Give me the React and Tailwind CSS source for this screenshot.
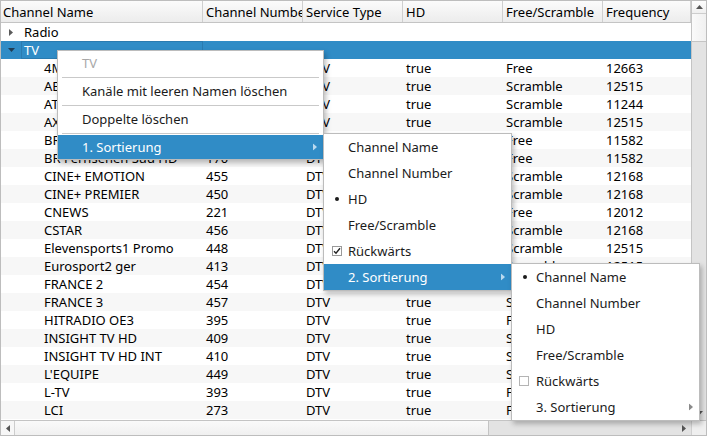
import { Fragment } from "react";

const headers = ["Channel Name", "Channel Number", "Service Type", "HD", "Free/Scramble", "Frequency"];

const rows = [
    ["4MUSIC HD", "412", "DTV", "true", "Free", "12663"],
    ["ABC Deutschland", "401", "DTV", "true", "Scramble", "12515"],
    ["ATV HD", "403", "DTV", "true", "Scramble", "11244"],
    ["AXN HD", "406", "DTV", "true", "Scramble", "12515"],
    ["BR Fernsehen Nord HD", "169", "DTV", "true", "Free", "11582"],
    ["BR Fernsehen Süd HD", "170", "DTV", "true", "Free", "11582"],
    ["CINE+ EMOTION", "455", "DTV", "true", "Scramble", "12168"],
    ["CINE+ PREMIER", "450", "DTV", "true", "Scramble", "12168"],
    ["CNEWS", "221", "DTV", "true", "Free", "12012"],
    ["CSTAR", "456", "DTV", "true", "Scramble", "12168"],
    ["Elevensports1 Promo", "448", "DTV", "true", "Scramble", "12515"],
    ["Eurosport2 ger", "413", "DTV", "true", "Scramble", "12515"],
    ["FRANCE 2", "454", "DTV", "true", "Scramble", "12168"],
    ["FRANCE 3", "457", "DTV", "true", "Scramble", "12168"],
    ["HITRADIO OE3", "395", "DTV", "true", "Free", "12692"],
    ["INSIGHT TV HD", "409", "DTV", "true", "Scramble", "12515"],
    ["INSIGHT TV HD INT", "410", "DTV", "true", "Scramble", "12515"],
    ["L'EQUIPE", "449", "DTV", "true", "Scramble", "12168"],
    ["L-TV", "393", "DTV", "true", "Free", "12633"],
    ["LCI", "273", "DTV", "true", "Free", "12012"],
];

const colW = ["w-[202px]", "w-[100px]", "w-[100px]", "w-[100px]", "w-[100px]", "flex-1"];

const Tri = ({ dir, color }) => {
    // small tree / menu arrows
    if (dir === "down") {
        return (
            <svg width="7" height="4" viewBox="0 0 7 4"><path d="M0 0h7L3.5 4z" fill={color} /></svg>
        );
    }
    if (dir === "up") {
        return (
            <svg width="7" height="4" viewBox="0 0 7 4"><path d="M0 4h7L3.5 0z" fill={color} /></svg>
        );
    }
    if (dir === "left") {
        return (
            <svg width="4" height="7" viewBox="0 0 4 7"><path d="M4 0v7L0 3.5z" fill={color} /></svg>
        );
    }
    return (
        <svg width="4" height="7" viewBox="0 0 4 7"><path d="M0 0v7l4-3.5z" fill={color} /></svg>
    );
};

const MenuItem = ({ label, h = "h-[26px]", active, mark, sub, disabled }) => (
    <div className={`relative flex items-center pl-[24px] ${h} ${active ? "bg-[#308cc6] text-white" : disabled ? "text-[#a8a8a8]" : "text-[#1b1b1b]"}`}>
        {mark === "dot" && (
            <span className="absolute left-[11px] top-1/2 -translate-y-1/2 w-[4px] h-[4px] rounded-full bg-[#1b1b1b]"></span>
        )}
        {mark === "checked" && (
            <span className="absolute left-[8px] top-1/2 -translate-y-1/2 w-[10px] h-[10px] border border-[#9a9a9a] bg-white flex items-center justify-center">
                <svg width="8" height="8" viewBox="0 0 8 8"><path d="M1 4.2l2 2L7 1.3" stroke="#222" strokeWidth="1.4" fill="none" /></svg>
            </span>
        )}
        {mark === "unchecked" && (
            <span className="absolute left-[7px] top-1/2 -translate-y-1/2 w-[10px] h-[10px] border border-[#b4b4b4] bg-white"></span>
        )}
        <span>{label}</span>
        {sub && (
            <span className="absolute right-[6px] top-1/2 -translate-y-1/2 flex">
                <Tri dir="right" color={active ? "#b9d9ef" : "#8a8a8a"} />
            </span>
        )}
    </div>
);

const Sep = () => (
    <div className="h-[4px] flex items-center px-[4px]">
        <div className="h-px w-full bg-[#c9c9c9]"></div>
    </div>
);

const SortMenu = ({ checked, dot, next, className }) => (
    <div className={`absolute w-[189px] bg-white border border-[#bcbcbc] shadow-[2px_3px_5px_rgba(0,0,0,0.25)] ${className}`}>
        <MenuItem label="Channel Name" mark={dot === 0 ? "dot" : null} />
        <MenuItem label="Channel Number" mark={dot === 1 ? "dot" : null} />
        <MenuItem label="HD" mark={dot === 2 ? "dot" : null} />
        <MenuItem label="Free/Scramble" mark={dot === 3 ? "dot" : null} />
        <MenuItem label="Rückwärts" mark={checked ? "checked" : "unchecked"} />
        <MenuItem label={next} sub active={next === "2. Sortierung"} />
    </div>
);

const App = () => {
    return (
        <div className="relative w-[707px] h-[436px] overflow-hidden bg-white border border-[#bdbdbd] font-['Noto_Sans',sans-serif] text-[13px] leading-[18px] text-black flex flex-col">
            <div className="flex flex-1 min-h-0">
                {/* table */}
                <div className="flex-1 flex flex-col min-w-0">
                    <div className="flex h-[22px] shrink-0 border-b border-[#c4c4c4] bg-gradient-to-b from-[#fbfbfb] to-[#ececec]">
                        {headers.map((h, i) => (
                            <div key={h} className={`${colW[i]} ${i === 0 ? "pl-[2px]" : "pl-[3px]"} border-r border-[#cfcfcf] flex items-center overflow-hidden whitespace-nowrap`}>
                                {h}
                            </div>
                        ))}
                    </div>

                    <div className="flex h-[18px] items-center bg-white">
                        <div className="w-[202px] flex items-center">
                            <span className="w-[20px] flex justify-center"><Tri dir="right" color="#5a5a5a" /></span>
                            <span className="pl-[3px]">Radio</span>
                        </div>
                    </div>

                    <div className="flex h-[18px] items-center bg-[#308cc6] text-white">
                        <div className="w-[202px] flex items-center h-full">
                            <span className="w-[20px] flex justify-center"><Tri dir="down" color="#1f3d55" /></span>
                            <span className="flex-1 h-full border border-[#2a7bb0] pl-[2px] flex items-center">TV</span>
                        </div>
                    </div>

                    {rows.map((r, i) => (
                        <div key={r[0]} className={`flex h-[18px] items-center whitespace-nowrap ${i % 2 ? "bg-[#f7f7f7]" : "bg-white"}`}>
                            {r.map((c, j) => (
                                <div key={j} className={`${colW[j]} ${j === 0 ? "pl-[43px]" : "pl-[3px]"} overflow-hidden`}>
                                    {c}
                                </div>
                            ))}
                        </div>
                    ))}
                </div>

                {/* vertical scrollbar */}
                <div className="w-[15px] border-l border-[#c4c4c4] bg-[#e3e3e3] flex flex-col">
                    <div className="h-[13px] bg-gradient-to-b from-[#fdfdfd] to-[#efefef] border-b border-[#cdcdcd] flex items-center justify-center">
                        <Tri dir="up" color="#555" />
                    </div>
                    <div className="h-[28px] bg-gradient-to-r from-[#fafafa] to-[#f0f0f0] border-b border-[#c4c4c4]"></div>
                    <div className="flex-1"></div>
                    <div className="h-[14px] flex items-center justify-center">
                        <Tri dir="down" color="#555" />
                    </div>
                </div>
            </div>

            {/* horizontal scrollbar */}
            <div className="h-[15px] shrink-0 border-t border-[#c4c4c4] flex bg-[#e3e3e3]">
                <div className="w-[14px] flex items-center justify-center bg-[#f7f7f7] border-r border-[#cdcdcd]">
                    <Tri dir="left" color="#555" />
                </div>
                <div className="w-[474px] bg-gradient-to-b from-[#fafafa] to-[#f0f0f0] border-r border-[#c4c4c4]"></div>
                <div className="flex-1"></div>
                <div className="w-[15px] flex items-center justify-center">
                    <Tri dir="right" color="#555" />
                </div>
                <div className="w-[15px] bg-[#efefef] border-l border-[#d0d0d0]"></div>
            </div>

            {/* context menu */}
            <div className="absolute left-[56px] top-[49px] w-[267px] bg-white border border-[#bcbcbc] shadow-[2px_3px_5px_rgba(0,0,0,0.25)]">
                <MenuItem label="TV" h="h-[24px]" disabled />
                <Sep />
                <MenuItem label="Kanäle mit leeren Namen löschen" h="h-[24px]" />
                <Sep />
                <MenuItem label="Doppelte löschen" h="h-[24px]" />
                <Sep />
                <MenuItem label="1. Sortierung" h="h-[24px]" sub active />
            </div>

            <SortMenu className="left-[322px] top-[132px]" dot={2} checked next="2. Sortierung" />
            <SortMenu className="left-[510px] top-[262px]" dot={0} checked={false} next="3. Sortierung" />
        </div>
    );
};

export default App;
